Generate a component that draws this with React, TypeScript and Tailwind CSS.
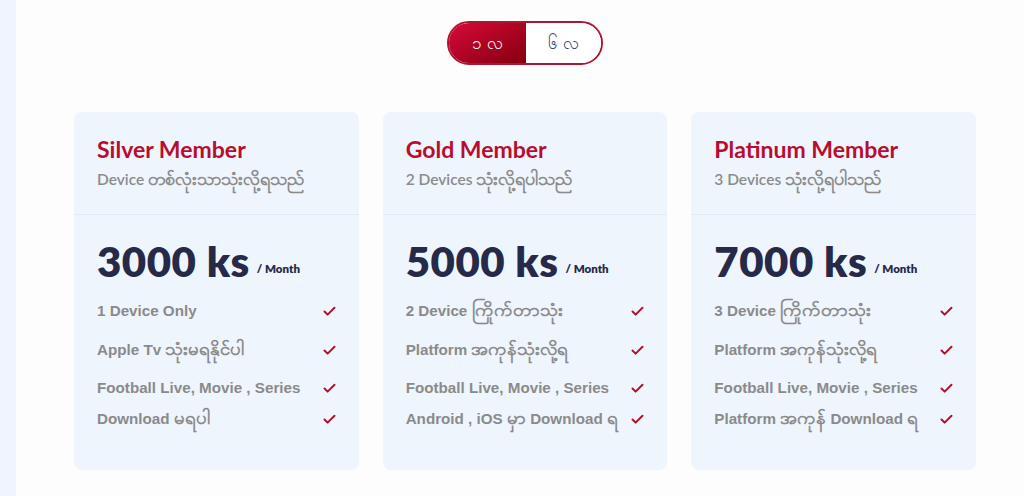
import { Check } from "lucide-react";

type Plan = {
  name: string;
  devices: string;
  price: string;
  features: string[];
};

const plans: Plan[] = [
  {
    name: "Silver Member",
    devices: "Device တစ်လုံးသာသုံးလို့ရသည်",
    price: "3000 ks",
    features: ["1 Device Only", "Apple Tv သုံးမရနိုင်ပါ", "Football Live, Movie , Series", "Download မရပါ"]
  },
  {
    name: "Gold Member",
    devices: "2 Devices သုံးလို့ရပါသည်",
    price: "5000 ks",
    features: [
      "2 Device ကြိုက်တာသုံး",
      "Platform အကုန်သုံးလို့ရ",
      "Football Live, Movie , Series",
      "Android , iOS မှာ Download ရ"
    ]
  },
  {
    name: "Platinum Member",
    devices: "3 Devices သုံးလို့ရပါသည်",
    price: "7000 ks",
    features: [
      "3 Device ကြိုက်တာသုံး",
      "Platform အကုန်သုံးလို့ရ",
      "Football Live, Movie , Series",
      "Platform အကုန် Download ရ"
    ]
  }
];

// rows line up across cards, so heights are fixed per position
const rowHeights = ["h-[40px]", "h-[38px]", "h-[38px]", "h-[24px]"];

const head = "font-['Lato','Noto_Sans',sans-serif]";
const body = "font-['Liberation_Sans','Noto_Sans',sans-serif]";

// the myanmar runs come out small in the fallback font, so bump them a bit
function Mixed({ text, big }: { text: string; big: string }) {
  const parts = text.split(/([\u1000-\u109f]+)/);
  return (
    <>
      {parts.map((p, i) =>
        /[\u1000-\u109f]/.test(p) ? (
          <span key={i} className={big}>
            {p}
          </span>
        ) : (
          p
        )
      )}
    </>
  );
}

function PlanCard({ plan }: { plan: Plan }) {
  return (
    <article className="overflow-hidden rounded-lg bg-[#eff5fd]">
      <div className="border-b border-[#e2eaf4] px-[23px] pt-[23px] pb-[25px]">
        <h3 className={`${head} text-[23px] font-bold leading-[28px] text-[#b80d2f]`}>{plan.name}</h3>
        <p className={`${head} mt-[4px] h-[22px] text-[15.5px] font-semibold leading-[22px] text-[#8b8b8b]`}>
          <Mixed text={plan.devices} big="text-[1.16em]" />
        </p>
      </div>
      <div className="px-[23px] pt-[22px] pb-[39px]">
        <div className="h-[48px] leading-[48px]">
          <span className={`${head} text-[42px] font-extrabold tracking-[0.5px] text-[#262a48]`}>{plan.price}</span>
          <span className={`${head} ml-[7px] align-[4px] text-[11.5px] font-extrabold text-[#262a48]`}>/ Month</span>
        </div>
        <ul className="mt-[6px]">
          {plan.features.map((f, i) => (
            <li key={f} className={["flex items-center justify-between", rowHeights[i]].join(" ")}>
              <span className={`${body} text-[15.2px] font-bold leading-[24px] text-[#8a8a8a]`}>
                <Mixed text={f} big="text-[1.22em] leading-[20px]" />
              </span>
              <Check className="mr-[-1px] size-[15px] shrink-0 text-[#b0102d]" strokeWidth={3.2} />
            </li>
          ))}
        </ul>
      </div>
    </article>
  );
}

export default function App() {
  return (
    <div className="flex min-h-[496px] bg-[#fdfdfd]">
      <div className="w-4 shrink-0 bg-[#eef5fe]" />
      <main className="flex-1 pt-[21px] pr-[48px] pl-[58px]">
        <div className="flex justify-center">
          <div className="flex h-[44px] w-[156px] overflow-hidden rounded-full border-2 border-[#b0152f]">
            <button
              type="button"
              className={`${head} flex w-[77px] items-center justify-center bg-gradient-to-br from-[#d70b38] to-[#86000f] text-[17px] text-white`}
            >
              ၁ လ
            </button>
            <button
              type="button"
              className={`${head} flex flex-1 items-center justify-center bg-white text-[17px] text-[#2f4675]`}
            >
              ၆ လ
            </button>
          </div>
        </div>
        <div className="mt-[47px] grid grid-cols-3 gap-x-[24px]">
          {plans.map((p) => (
            <PlanCard key={p.name} plan={p} />
          ))}
        </div>
      </main>
    </div>
  );
}
